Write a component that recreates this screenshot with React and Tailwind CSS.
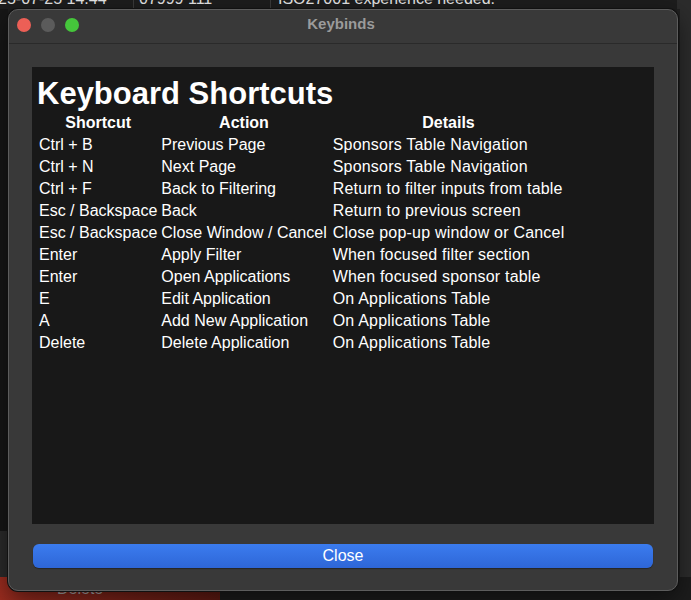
import React from 'react';

// keybind rows shown in the help window
const shortcuts = [
  ['Ctrl + B', 'Previous Page', 'Sponsors Table Navigation'],
  ['Ctrl + N', 'Next Page', 'Sponsors Table Navigation'],
  ['Ctrl + F', 'Back to Filtering', 'Return to filter inputs from table'],
  ['Esc / Backspace', 'Back', 'Return to previous screen'],
  ['Esc / Backspace', 'Close Window / Cancel', 'Close pop-up window or Cancel'],
  ['Enter', 'Apply Filter', 'When focused filter section'],
  ['Enter', 'Open Applications', 'When focused sponsor table'],
  ['E', 'Edit Application', 'On Applications Table'],
  ['A', 'Add New Application', 'On Applications Table'],
  ['Delete', 'Delete Application', 'On Applications Table'],
];

const BehindApp = () => (
  <div className="flex h-full flex-col">
    {/* top row of the table behind the window */}
    <div className="h-[9px] overflow-hidden">
      <div className="-mt-[12px] flex h-[22px] items-center text-[16px] leading-[22px] text-[#e6e6e6]">
        <div className="w-[133px] shrink-0 overflow-hidden whitespace-nowrap pl-0">
          <span className="-ml-[2px] inline-block">25-07-25 14:44</span>
        </div>
        <div className="h-full w-px bg-[#3a3a3a]" />
        <div className="w-[136px] shrink-0 pl-[5px] whitespace-nowrap">07999 111</div>
        <div className="h-full w-px bg-[#3a3a3a]" />
        <div className="flex-1 pl-[7px] whitespace-nowrap">ISO27001 experience needed.</div>
        <div className="h-full w-[14px] bg-[#2c2c2c]" />
      </div>
    </div>
    <div className="flex flex-1">
      <div className="flex w-[8px] flex-col">
        <div className="h-[522px] bg-[#171717]" />
        <div className="flex-1 bg-[#2b2b2b]" />
      </div>
      <div className="flex-1 bg-[#1d1d1d]" />
      <div className="w-[3px] bg-[#202020]" />
      <div className="w-[11px] bg-[#2c2c2c]" />
    </div>
    <div className="flex h-[23px]">
      <div className="w-[220px] overflow-hidden bg-gradient-to-r from-[#9a2c1f] to-[#5f1a13] pl-[57px] text-[16px] leading-[24px] text-[#a8a8a8]">
        Delete
      </div>
      <div className="flex-1 bg-[#1c1c1c]" />
    </div>
  </div>
);

const TrafficLights = () => (
  <div className="flex gap-[10px] pl-[8px] pt-[8px]">
    <div className="h-[14px] w-[14px] rounded-full bg-[#ec5f56]" />
    <div className="h-[14px] w-[14px] rounded-full bg-[#5b5b5b]" />
    <div className="h-[14px] w-[14px] rounded-full bg-[#45c63b]" />
  </div>
);

const KeybindsWindow = () => (
  <div className="absolute left-[8px] top-[9px] flex h-[582px] w-[670px] flex-col rounded-[10px] border border-[#5d5d5d] bg-[#393939] shadow-[0_0_0_1px_#111,0_8px_24px_rgba(0,0,0,0.5)]">
    <div className="grid h-[34px] grid-cols-[1fr_auto_1fr] items-start border-b border-[#2a2a2a]">
      <TrafficLights />
      <div className="pt-[5px] pr-[4px] text-[15px] font-bold leading-[18px] text-[#9b9b9b]">Keybinds</div>
      <div />
    </div>
    <div className="flex flex-1 flex-col px-[23px] pt-[23px]">
      <div className="h-[457px] bg-[#181818] pl-[5px] pt-[9px] text-white">
        <h1 className="text-[31px] font-bold leading-[36px]">Keyboard Shortcuts</h1>
        <table className="border-collapse text-[16px] leading-[22px]">
          <thead>
            <tr>
              <th className="px-[2px] py-0 text-center font-bold">Shortcut</th>
              <th className="px-[2px] py-0 text-center font-bold">Action</th>
              <th className="pl-[4px] pr-[2px] py-0 text-center font-bold">Details</th>
            </tr>
          </thead>
          <tbody>
            {shortcuts.map(([key, action, details], i) => (
              <tr key={i}>
                <td className="whitespace-nowrap px-[2px] py-0">{key}</td>
                <td className="whitespace-nowrap px-[2px] py-0">{action}</td>
                <td className="whitespace-nowrap pl-[4px] pr-[2px] py-0 tracking-[0.2px]">{details}</td>
              </tr>
            ))}
          </tbody>
        </table>
      </div>
      <button className="mx-[1px] mt-[20px] h-[24px] rounded-[6px] bg-gradient-to-b from-[#3b7cef] to-[#2e66d7] text-[16px] leading-[24px] text-white shadow-[0_1px_1px_rgba(0,0,0,0.35)]">
        Close
      </button>
    </div>
  </div>
);

export default function App() {
  return (
    <div className="relative h-[600px] w-[691px] overflow-hidden bg-[#1d1d1d] font-['Liberation_Sans',Arial,sans-serif]">
      <BehindApp />
      <KeybindsWindow />
    </div>
  );
}
